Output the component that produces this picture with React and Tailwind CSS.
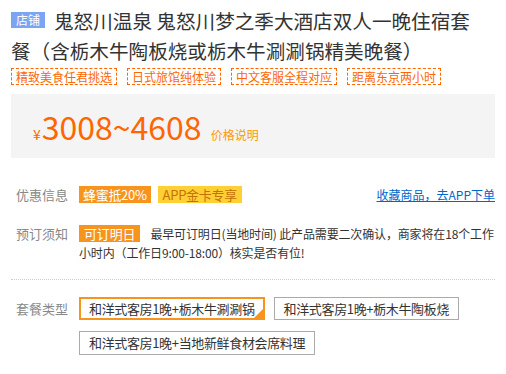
export default function App() {
  const tags = ['精致美食任君挑选', '日式旅馆纯体验', '中文客服全程对应', '距离东京两小时'];

  return (
    <div className="w-[506px] h-[374px] bg-white text-[#333] px-[11px] pt-[6px] overflow-hidden" style={{ fontFamily: '"Noto Sans CJK SC", "Liberation Sans", sans-serif' }}>
      {/* title */}
      <h1 className="text-[19.6px] leading-[30px] text-[#333] font-normal pr-[20px]">
        <span className="inline-block align-top mt-[6px] bg-[#7ba4f3] text-white text-[12px] leading-[16px] px-[5px] mr-[9px]">店铺</span>
        鬼怒川温泉 鬼怒川梦之季大酒店双人一晚住宿套餐（含栃木牛陶板烧或栃木牛涮涮锅精美晚餐）
      </h1>

      <div className="flex gap-[10px] mt-[2px]">
        {tags.map((t) => (
          <span key={t} className="border border-dashed border-[#f60] text-[#f60] text-[12px] leading-[15px] px-[4px]">{t}</span>
        ))}
      </div>

      {/* price */}
      <div className="mt-[9px] h-[64px] bg-[#f4f4f4] flex items-baseline px-[22px] pt-[10px] text-[#f60]">
        <span className="text-[14px] mr-[1px]">¥</span>
        <span className="text-[32px] leading-[44px]">3008~4608</span>
        <span className="text-[12px] text-[#f90] ml-[9px]">价格说明</span>
      </div>

      {/* discounts */}
      <div className="flex items-center mt-[27px] pl-[5px]">
        <span className="w-[63px] text-[13px] text-[#888]">优惠信息</span>
        <span className="bg-[#f7941d] text-white text-[13px] leading-[17px] px-[4px] tracking-[-0.3px]">蜂蜜抵20%</span>
        <span className="bg-[#ffd033] text-[#c6700a] text-[13px] leading-[17px] px-[5px] ml-[7px] tracking-[-0.3px]">APP金卡专享</span>
        <a href="#" className="ml-auto text-[12px] text-[#0066cc] underline">收藏商品，去APP下单</a>
      </div>

      {/* booking notice */}
      <div className="flex mt-[19px] pl-[5px]">
        <span className="w-[63px] shrink-0 text-[13px] text-[#888] leading-[19px]">预订须知</span>
        <p className="text-[12px] leading-[19px] text-[#333] tracking-[-0.15px]">
          <span className="inline-block align-top mt-[1px] bg-[#f7941d] text-white text-[13px] leading-[17px] px-[5px] mr-[10px]">可订明日</span>
          最早可订明日(当地时间) 此产品需要二次确认，商家将在18个工作小时内（工作日9:00-18:00）核实是否有位!
        </p>
      </div>

      <div className="mt-[17px] border-t border-dotted border-[#ccc]"></div>

      {/* packages */}
      <div className="flex mt-[17px] pl-[5px]">
        <span className="w-[63px] shrink-0 text-[13px] text-[#888] leading-[23px]">套餐类型</span>
        <div className="flex flex-wrap gap-x-[9px] gap-y-[11px] w-[400px]">
          <span className="relative border-2 border-[#f7941d] text-[13px] leading-[19px] px-[8px] tracking-[-0.35px]">
            和洋式客房1晚+栃木牛涮涮锅
            <span className="absolute right-0 bottom-0 w-0 h-0 border-l-[9px] border-l-transparent border-b-[9px] border-b-[#f7941d]"></span>
          </span>
          <span className="border border-[#aaa] text-[13px] leading-[21px] px-[9px] tracking-[-0.35px]">和洋式客房1晚+栃木牛陶板烧</span>
          <span className="border border-[#aaa] text-[13px] leading-[22px] px-[9px] tracking-[-0.35px]">和洋式客房1晚+当地新鲜食材会席料理</span>
        </div>
      </div>
    </div>
  );
}
